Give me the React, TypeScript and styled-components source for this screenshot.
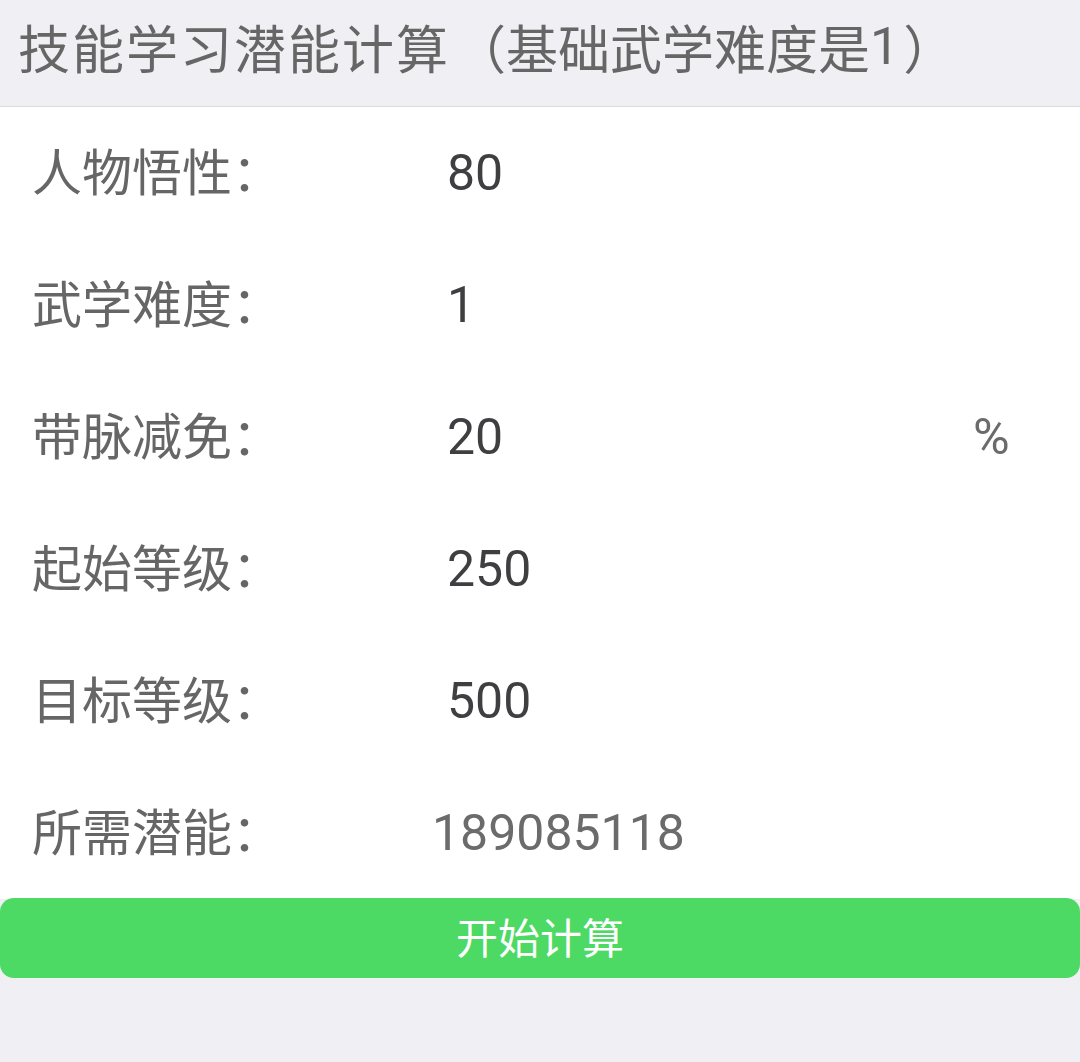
import React from "react";
import styled, { createGlobalStyle } from "styled-components";

const Global = createGlobalStyle`
  html, body { margin: 0; padding: 0; background: #efeff4; }
  body { font-family: Roboto, "Noto Sans CJK SC", sans-serif; }
`;

const Page = styled.div`
  width: 1080px;
  min-height: 1062px;
  background: #efeff4;
  display: flex;
  flex-direction: column;
`;

const Header = styled.header`
  height: 107px;
  border-bottom: 1px solid #dcdce0;
  display: flex;
  align-items: center;
  padding-left: 18px;
  padding-bottom: 14px;
  box-sizing: border-box;
  font-size: 52px;
  color: #666;
  font-family: "Noto Sans CJK SC", sans-serif;
  text-spacing-trim: space-all;
  white-space: nowrap;
`;

const TitleMain = styled.span`
  letter-spacing: 2px;
`;

const Paren = styled.span<{ $side: "open" | "close" }>`
  display: inline-block;
  margin-left: ${(p) => (p.$side === "open" ? "4px" : "0")};
`;

const Num = styled.span`
  font-family: Roboto, sans-serif;
  margin-right: 4px;
`;

const Body = styled.section`
  background: #fff;
  display: flex;
  flex-direction: column;
`;

const Row = styled.div<{ $result?: boolean }>`
  height: 132px;
  display: grid;
  grid-template-columns: ${(p) => (p.$result ? "400px" : "415px")} 1fr 107px;
  align-items: center;
  padding-left: 32px;
`;

const Label = styled.label`
  font-family: "Noto Sans CJK SC", sans-serif;
  font-size: 50px;
  color: #666;
  line-height: 1;
  padding-bottom: 8px;
`;

const Value = styled.input`
  border: none;
  outline: none;
  background: transparent;
  font-family: Roboto, sans-serif;
  font-size: 50px;
  color: #3f3f42;
  padding: 0;
  width: 100%;
`;

const Result = styled.span`
  font-family: Roboto, sans-serif;
  font-size: 50px;
  color: #6b6b6b;
`;

const Unit = styled.span`
  font-family: Roboto, sans-serif;
  font-size: 50px;
  color: #6b6b6b;
`;

const Button = styled.button`
  height: 80px;
  margin-top: -1px;
  border: none;
  border-radius: 14px;
  background: #4cd964;
  color: #fff;
  font-family: "Noto Sans CJK SC", sans-serif;
  font-size: 42px;
  padding: 0 0 6px;
  cursor: pointer;
`;

const fields = [
  { label: "人物悟性：", value: "80" },
  { label: "武学难度：", value: "1" },
  { label: "带脉减免：", value: "20", unit: "%" },
  { label: "起始等级：", value: "250" },
  { label: "目标等级：", value: "500" },
];

export default function App() {
  return (
    <Page>
      <Global />
      <Header>
        <TitleMain>技能学习潜能计算</TitleMain>
        <Paren $side="open">（</Paren>基础武学难度是<Num>1</Num>
        <Paren $side="close">）</Paren>
      </Header>
      <Body>
        {fields.map((f) => (
          <Row key={f.label}>
            <Label>{f.label}</Label>
            <Value defaultValue={f.value} />
            <Unit>{f.unit ?? ""}</Unit>
          </Row>
        ))}
        <Row $result>
          <Label>所需潜能：</Label>
          <Result>189085118</Result>
          <span />
        </Row>
      </Body>
      <Button>开始计算</Button>
    </Page>
  );
}
